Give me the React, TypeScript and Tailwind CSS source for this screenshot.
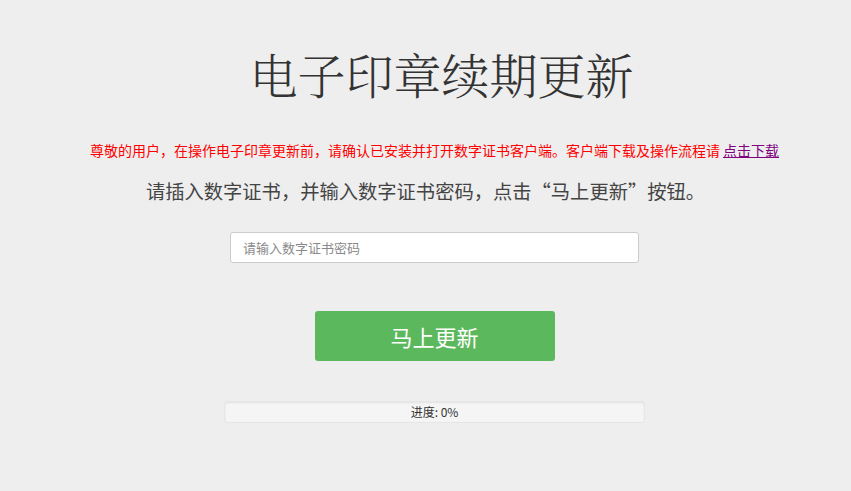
const App = () => (
  <div className="min-h-[491px] w-full bg-[#eeeeee] pl-[18px] font-['Microsoft_YaHei','Noto_Sans_CJK_SC',sans-serif] flex flex-col items-center">
    <h1 className="mt-[42px] ml-[14px] text-[48px] leading-[64px] font-light text-[#333] font-['Noto_Serif_CJK_SC','Noto_Sans_CJK_SC',serif]">
      电子印章续期更新
    </h1>

    <p className="mt-[34px] text-[14px] leading-[20px] text-[#ff0000]">
      尊敬的用户，在操作电子印章更新前，请确认已安装并打开数字证书客户端。客户端下载及操作流程请{" "}
      <a href="#" className="text-[#800080] underline">点击下载</a>
    </p>

    <p className="mt-[18px] ml-[-18px] text-[19.3px] leading-[26px] text-[#444]">
      请插入数字证书，并输入数字证书密码，点击“马上更新”按钮。
    </p>

    <input
      type="password"
      placeholder="请输入数字证书密码"
      className="mt-[28px] w-[409px] h-[31px] bg-white border border-[#cccccc] rounded-[3px] px-[12px] text-[13px] placeholder:text-[#8a8a8a] outline-none"
    />

    <button className="mt-[48px] w-[240px] h-[50px] bg-[#5cb85c] text-white text-[22px] rounded-[3px]">
      马上更新
    </button>

    <div className="mt-[40px] w-[421px] h-[22px] bg-[#f5f5f5] rounded-[3px] shadow-[inset_0_1px_2px_rgba(0,0,0,0.08)] border border-[#e6e6e6] flex items-center justify-center text-[12px] text-[#333]">
      进度: 0%
    </div>
  </div>
);

export default App;
